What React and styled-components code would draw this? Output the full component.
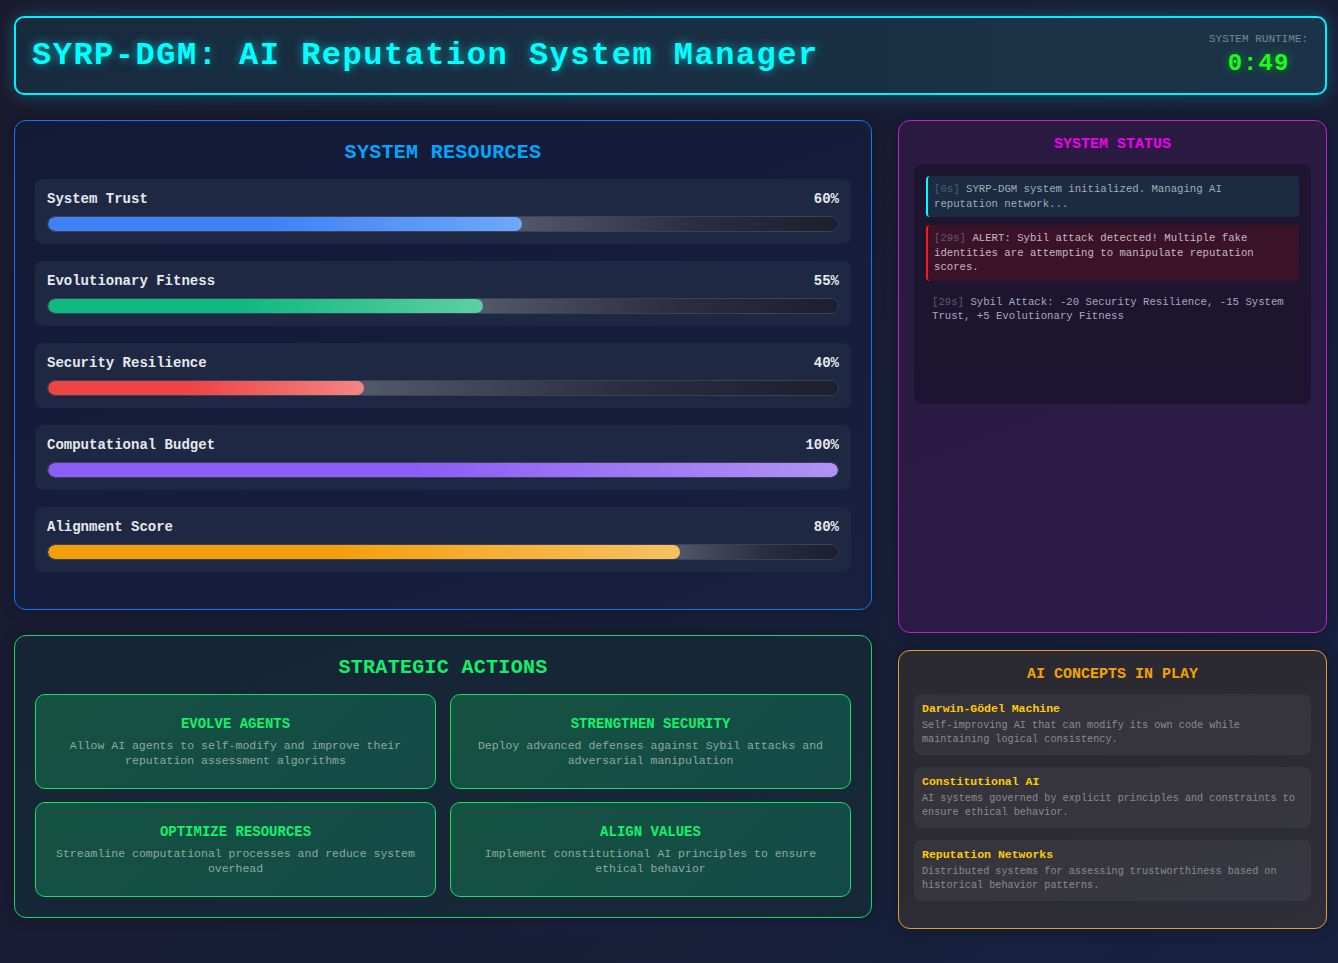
import React from 'react'
import styled, { createGlobalStyle } from 'styled-components';

const GlobalStyle = createGlobalStyle`
  * { box-sizing: border-box; }
  body {
    margin: 0;
    min-height: 100vh;
    background: linear-gradient(135deg, #1a1a2e 0%, #16213e 100%);
    font-family: "Courier New", "Liberation Mono", monospace;
    color: #e0e0e0;
  }
`;

const resources = [
  { name: "System Trust", value: 60, from: "#3b82f6", to: "#6ea8fa" },
  { name: "Evolutionary Fitness", value: 55, from: "#10b981", to: "#5ccfa6" },
  { name: "Security Resilience", value: 40, from: "#ef4444", to: "#f38585" },
  { name: "Computational Budget", value: 100, from: "#8b5cf6", to: "#b092f6" },
  { name: "Alignment Score", value: 80, from: "#f59e0b", to: "#f7c163" },
];

const actions = [
  { title: "EVOLVE AGENTS", desc: "Allow AI agents to self-modify and improve their reputation assessment algorithms" },
  { title: "STRENGTHEN SECURITY", desc: "Deploy advanced defenses against Sybil attacks and adversarial manipulation" },
  { title: "OPTIMIZE RESOURCES", desc: "Streamline computational processes and reduce system overhead" },
  { title: "ALIGN VALUES", desc: "Implement constitutional AI principles to ensure ethical behavior" },
];

const logs = [
  { time: "0s", text: "SYRP-DGM system initialized. Managing AI reputation network...", kind: "info" },
  { time: "29s", text: "ALERT: Sybil attack detected! Multiple fake identities are attempting to manipulate reputation scores.", kind: "alert" },
  { time: "29s", text: "Sybil Attack: -20 Security Resilience, -15 System Trust, +5 Evolutionary Fitness", kind: "plain" },
];

const concepts = [
  { title: "Darwin-Gödel Machine", desc: "Self-improving AI that can modify its own code while maintaining logical consistency." },
  { title: "Constitutional AI", desc: "AI systems governed by explicit principles and constraints to ensure ethical behavior." },
  { title: "Reputation Networks", desc: "Distributed systems for assessing trustworthiness based on historical behavior patterns." },
];

export default function App() {
  return (
    <>
    <GlobalStyle/>
    <Page>
      <Header>
        <Title>SYRP-DGM: AI Reputation System Manager</Title>
        <Runtime>
          <span>SYSTEM RUNTIME:</span>
          <Timer>0:49</Timer>
        </Runtime>
      </Header>

      <Main>
        <Column $gap={25}>
          <Panel $border="#0a78f0" $bg="linear-gradient(160deg, #121a36 0%, #18203e 100%)" $pad="20px">
            <PanelTitle $color="#00a6ff">SYSTEM RESOURCES</PanelTitle>
            {resources.map((r) => (
              <Resource key={r.name}>
                <ResourceHead>
                  <span>{r.name}</span>
                  <span>{r.value}%</span>
                </ResourceHead>
                <Track>
                  <Fill $from={r.from} $to={r.to} style={{ width: `${r.value}%` }}/>
                  {r.value < 100 && <Rest/>}
                </Track>
              </Resource>
            ))}
          </Panel>

          <Panel $border="#12d85e" $bg="linear-gradient(160deg, #152536 0%, #172838 100%)" $pad="20px">
            <PanelTitle $color="#12f06a">STRATEGIC ACTIONS</PanelTitle>
            <ActionGrid>
              {actions.map((a) => (
                <ActionCard key={a.title}>
                  <h4>{a.title}</h4>
                  <p>{a.desc}</p>
                </ActionCard>
              ))}
            </ActionGrid>
          </Panel>
        </Column>

        <Column $gap={17}>
          <StatusPanel $border="#c81ec8" $bg="linear-gradient(160deg, #2a1a40 0%, #2c1b48 100%)" $pad="15px">
            <SideTitle $color="#f000f0">SYSTEM STATUS</SideTitle>
            <LogBox>
              {logs.map((l, i) => (
                <LogEntry key={i} $kind={l.kind}>
                  <Stamp>[{l.time}]</Stamp> {l.text}
                </LogEntry>
              ))}
            </LogBox>
          </StatusPanel>

          <Panel $border="#e8a020" $bg="linear-gradient(160deg, #2a2830 0%, #2e2e38 100%)" $pad="15px">
            <SideTitle $color="#f5a200">AI CONCEPTS IN PLAY</SideTitle>
            {concepts.map((c) => (
              <Concept key={c.title}>
                <h5>{c.title}</h5>
                <p>{c.desc}</p>
              </Concept>
            ))}
          </Panel>
        </Column>
      </Main>
    </Page>
    </>
  )
}

const Page = styled.div`
  padding: 16px 11px 30px 14px;
`;

const Header = styled.header`
  display: flex;
  justify-content: space-between;
  align-items: center;
  padding: 15px 17px 16px 16px;
  border: 2px solid #00f0ff;
  border-radius: 10px;
  background: linear-gradient(90deg, #172a3e 0%, #1b3348 100%);
  box-shadow: 0 0 18px rgba(0, 255, 255, 0.25);
  margin-bottom: 25px;
`;

const Title = styled.h1`
  margin: 0;
  font-size: 32px;
  letter-spacing: 1.5px;
  font-weight: bold;
  color: #00ffff;
  text-shadow: 0 0 10px rgba(0, 255, 255, 0.6);
`;

const Runtime = styled.div`
  display: flex;
  flex-direction: column;
  align-items: center;
  span {
    font-size: 11px;
    color: #7a8590;
    line-height: 13px;
  }
`;

const Timer = styled.div`
  margin-top: 4px;
  font-size: 24px;
  line-height: 27px;
  font-weight: bold;
  letter-spacing: 1px;
  color: #1aff1a;
  text-shadow: 0 0 8px rgba(0, 255, 0, 0.5);
`;

const Main = styled.div`
  display: grid;
  grid-template-columns: 2fr 1fr;
  gap: 26px;
  align-items: start;
`;

const Column = styled.div`
  display: flex;
  flex-direction: column;
  gap: ${(p) => p.$gap}px;
`;

const Panel = styled.section`
  border: 1px solid ${(p) => p.$border};
  background: ${(p) => p.$bg};
  border-radius: 12px;
  padding: ${(p) => p.$pad};
  box-shadow: 0 0 14px rgba(0, 0, 0, 0.25);
`;

const StatusPanel = styled(Panel)`
  min-height: 513px;
`;

const PanelTitle = styled.h2`
  margin: 0 0 15px;
  text-align: center;
  font-size: 20px;
  line-height: 23px;
  letter-spacing: 0.3px;
  font-weight: bold;
  color: ${(p) => p.$color};
`;

const SideTitle = styled.h3`
  margin: 0 0 10px;
  text-align: center;
  font-size: 15px;
  line-height: 18px;
  font-weight: bold;
  color: ${(p) => p.$color};
`;

const Resource = styled.div`
  background: #1f2843;
  border-radius: 8px;
  padding: 12px;
  margin-bottom: 17px;
`;

const ResourceHead = styled.div`
  display: flex;
  justify-content: space-between;
  font-size: 14px;
  line-height: 17px;
  font-weight: bold;
  color: #e6e8ee;
  margin-bottom: 8px;
`;

const Track = styled.div`
  display: flex;
  height: 16px;
  border: 1px solid #3c4256;
  border-radius: 8px;
  overflow: hidden;
  background: #1b1f2e;
`;

const Fill = styled.div`
  position: relative;
  z-index: 1;
  flex-shrink: 0;
  height: 100%;
  border-radius: 8px;
  background: linear-gradient(90deg, ${(p) => p.$from} 0%, ${(p) => p.$from} 45%, ${(p) => p.$to} 100%);
`;

const Rest = styled.div`
  flex: 1;
  margin-left: -8px;
  background: linear-gradient(90deg, #555a6a 0%, #2a2e3e 55%, #1b1f2e 100%);
`;

const ActionGrid = styled.div`
  display: grid;
  grid-template-columns: 1fr 1fr;
  gap: 13px 14px;
`;

const ActionCard = styled.div`
  border: 1px solid #10e060;
  border-radius: 10px;
  padding: 20px 16px;
  text-align: center;
  background: linear-gradient(135deg, #155240 0%, #134a48 100%);
  h4 {
    margin: 0 0 5px;
    font-size: 14px;
    line-height: 18px;
    font-weight: bold;
    color: #14f06a;
  }
  p {
    margin: 0;
    font-size: 11.5px;
    line-height: 15px;
    color: #8fa89f;
  }
`;

const LogBox = styled.div`
  height: 240px;
  overflow: hidden;
  background: linear-gradient(180deg, #1f1530 0%, #1c1430 100%);
  border-radius: 8px;
  padding: 12px;
  display: flex;
  flex-direction: column;
  gap: 8px;
`;

const LogEntry = styled.div`
  font-size: 10.67px;
  line-height: 14.5px;
  padding: ${(p) => (p.$kind === "plain" ? "6px" : "6px 10px 6px 6px")};
  border-radius: 4px;
  color: ${(p) => (p.$kind === "alert" ? "#c4b8c4" : "#a4aab8")};
  background: ${(p) => (p.$kind === "info" ? "#1b2c42" : p.$kind === "alert" ? "#3b1329" : "transparent")};
  border-left: ${(p) => (p.$kind === "info" ? "2px solid #00ffff" : p.$kind === "alert" ? "2px solid #ff1a1a" : "none")};
`;

const Stamp = styled.span`
  color: #5c5a70;
`;

const Concept = styled.div`
  background: rgba(255, 255, 255, 0.05);
  border-radius: 8px;
  padding: 8px;
  margin-bottom: 12px;
  h5 {
    margin: 0 0 3px;
    font-size: 11.5px;
    line-height: 14px;
    font-weight: bold;
    color: #ffcc00;
  }
  p {
    margin: 0;
    font-size: 10.2px;
    line-height: 14px;
    color: #8a8a92;
  }
`;
